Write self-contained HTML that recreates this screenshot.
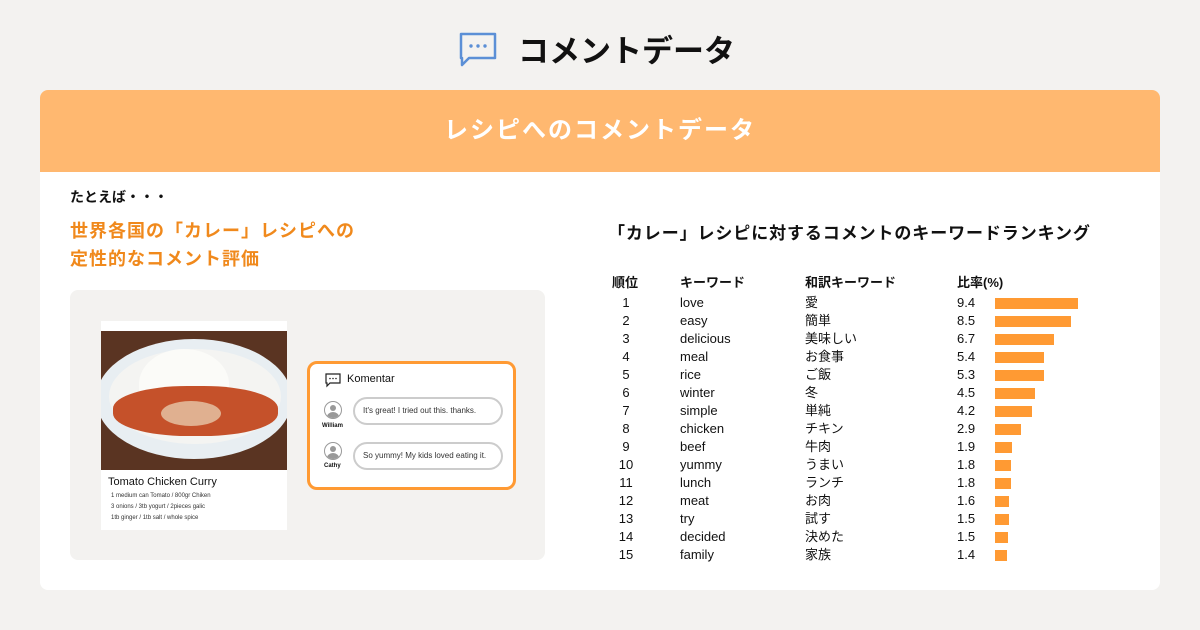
<!DOCTYPE html>
<html><head><meta charset="utf-8"><style>
*{margin:0;padding:0;box-sizing:border-box}
body{width:1200px;height:630px;background:#f3f2f0;font-family:"Liberation Sans","Noto Sans CJK JP",sans-serif;position:relative;overflow:hidden;color:#111}
.a{position:absolute}
.card{left:40px;top:90px;width:1120px;height:500px;background:#fff;border-radius:8px;overflow:hidden}
.hd{left:0;top:0;width:1120px;height:82px;background:#ffb870;color:#fff;font-weight:bold;font-size:24px;text-align:center;line-height:82px;letter-spacing:2px}
.or{color:#f0891c;font-weight:bold;font-size:18px;letter-spacing:1px}
.row{position:absolute;left:0;font-size:13px;height:18px;line-height:18px;width:600px}
.row span{position:absolute}
.bar{position:absolute;left:995px;height:11px;top:3.5px;background:#ff9a33}
.bub{position:absolute;left:353px;width:150px;height:28px;border:2px solid #ccc;border-radius:14px;font-size:8px;line-height:24px;padding-left:8px;color:#333;background:#fff}
.av{position:absolute;left:324px;width:18px;height:18px;border-radius:50%;border:1.5px solid #999;overflow:hidden;background:#fff}
</style></head><body>
<svg class="a" style="left:458px;top:31px" width="40" height="36" viewBox="0 0 40 36"><path d="M3 3H37V27H11L4 34V27H3Z" fill="none" stroke="#5b8fd6" stroke-width="2.5" stroke-linejoin="round"/><circle cx="13" cy="15" r="1.7" fill="#5b8fd6"/><circle cx="20" cy="15" r="1.7" fill="#5b8fd6"/><circle cx="27" cy="15" r="1.7" fill="#5b8fd6"/></svg>
<div class="a" style="left:518px;top:26px;font-size:31px;font-weight:bold">コメントデータ</div>
<div class="a card">
<div class="a hd">レシピへのコメントデータ</div>
</div>
<div class="a" style="left:70px;top:187px;font-size:14px;font-weight:bold">たとえば・・・</div>
<div class="a or" style="left:70px;top:217px;line-height:28px">世界各国の「カレー」レシピへの<br>定性的なコメント評価</div>
<div class="a" style="left:70px;top:290px;width:475px;height:270px;background:#f3f2f0;border-radius:8px"></div>
<div class="a" style="left:101px;top:321px;width:186px;height:209px;background:#fff"></div>
<div class="a" style="left:101px;top:331px;width:186px;height:139px;background:#5a3422;overflow:hidden">
 <div class="a" style="left:-5px;top:8px;width:196px;height:120px;border-radius:50%;background:#e8eef2"></div>
 <div class="a" style="left:8px;top:18px;width:172px;height:95px;border-radius:50%;background:#f4f4f2"></div>
 <div class="a" style="left:38px;top:18px;width:90px;height:70px;border-radius:50% 50% 40% 40%;background:#fbfbf8"></div>
 <div class="a" style="left:12px;top:55px;width:165px;height:50px;border-radius:45%;background:#c5512a"></div>
 <div class="a" style="left:60px;top:70px;width:60px;height:25px;border-radius:50%;background:#e0b090"></div>
</div>
<div class="a" style="left:108px;top:476px;font-size:11px">Tomato Chicken Curry</div>
<div class="a" style="left:111px;top:491px;font-size:6px;line-height:11px;color:#333">1 medium can Tomato / 800gr Chiken<br>3 onions / 3tb yogurt / 2pieces galic<br>1tb ginger / 1tb salt / whole spice</div>
<div class="a" style="left:307px;top:361px;width:209px;height:129px;border:3px solid #ff9a33;border-radius:10px;background:#fff"></div>
<svg class="a" style="left:325px;top:372px" width="16" height="16" viewBox="0 0 16 16"><path d="M1 2H15V11H5L2 14V11H1Z" fill="none" stroke="#222" stroke-width="1.2"/><circle cx="5" cy="6.5" r=".8" fill="#222"/><circle cx="8" cy="6.5" r=".8" fill="#222"/><circle cx="11" cy="6.5" r=".8" fill="#222"/></svg>
<div class="a" style="left:347px;top:373px;font-size:11px">Komentar</div>
<div class="av" style="top:401px"><div class="a" style="left:5px;top:3px;width:6px;height:6px;border-radius:50%;background:#999"></div><div class="a" style="left:2px;top:10px;width:12px;height:10px;border-radius:50%;background:#999"></div></div>
<div class="a" style="left:322px;top:423px;font-size:6px;font-weight:bold">William</div>
<div class="bub" style="top:397px">It's great! I tried out this. thanks.</div>
<div class="av" style="top:442px"><div class="a" style="left:5px;top:3px;width:6px;height:6px;border-radius:50%;background:#999"></div><div class="a" style="left:2px;top:10px;width:12px;height:10px;border-radius:50%;background:#999"></div></div>
<div class="a" style="left:324px;top:463px;font-size:6px;font-weight:bold">Cathy</div>
<div class="bub" style="top:442px">So yummy! My kids loved eating it.</div>
<div class="a" style="left:608px;top:219px;font-size:17px;font-weight:bold;letter-spacing:0.9px">「カレー」レシピに対するコメントのキーワードランキング</div>
<div class="a" style="left:0;top:274px;width:1200px;height:18px;font-size:13px;font-weight:bold;line-height:18px">
<span class="a" style="left:612px">順位</span><span class="a" style="left:680px">キーワード</span><span class="a" style="left:805px">和訳キーワード</span><span class="a" style="left:957px">比率(%)</span></div>
<div class="a" style="left:0;top:294px;width:1200px">
<div class="row" style="top:0;width:1200px"><span style="left:618px;width:16px;text-align:center">1</span><span style="left:680px">love</span><span style="left:805px">愛</span><span style="left:957px">9.4</span><div class="bar" style="width:83px"></div></div>
<div class="row" style="top:18px;width:1200px"><span style="left:618px;width:16px;text-align:center">2</span><span style="left:680px">easy</span><span style="left:805px">簡単</span><span style="left:957px">8.5</span><div class="bar" style="width:76px"></div></div>
<div class="row" style="top:36px;width:1200px"><span style="left:618px;width:16px;text-align:center">3</span><span style="left:680px">delicious</span><span style="left:805px">美味しい</span><span style="left:957px">6.7</span><div class="bar" style="width:59px"></div></div>
<div class="row" style="top:54px;width:1200px"><span style="left:618px;width:16px;text-align:center">4</span><span style="left:680px">meal</span><span style="left:805px">お食事</span><span style="left:957px">5.4</span><div class="bar" style="width:49px"></div></div>
<div class="row" style="top:72px;width:1200px"><span style="left:618px;width:16px;text-align:center">5</span><span style="left:680px">rice</span><span style="left:805px">ご飯</span><span style="left:957px">5.3</span><div class="bar" style="width:49px"></div></div>
<div class="row" style="top:90px;width:1200px"><span style="left:618px;width:16px;text-align:center">6</span><span style="left:680px">winter</span><span style="left:805px">冬</span><span style="left:957px">4.5</span><div class="bar" style="width:40px"></div></div>
<div class="row" style="top:108px;width:1200px"><span style="left:618px;width:16px;text-align:center">7</span><span style="left:680px">simple</span><span style="left:805px">単純</span><span style="left:957px">4.2</span><div class="bar" style="width:37px"></div></div>
<div class="row" style="top:126px;width:1200px"><span style="left:618px;width:16px;text-align:center">8</span><span style="left:680px">chicken</span><span style="left:805px">チキン</span><span style="left:957px">2.9</span><div class="bar" style="width:26px"></div></div>
<div class="row" style="top:144px;width:1200px"><span style="left:618px;width:16px;text-align:center">9</span><span style="left:680px">beef</span><span style="left:805px">牛肉</span><span style="left:957px">1.9</span><div class="bar" style="width:17px"></div></div>
<div class="row" style="top:162px;width:1200px"><span style="left:618px;width:16px;text-align:center">10</span><span style="left:680px">yummy</span><span style="left:805px">うまい</span><span style="left:957px">1.8</span><div class="bar" style="width:16px"></div></div>
<div class="row" style="top:180px;width:1200px"><span style="left:618px;width:16px;text-align:center">11</span><span style="left:680px">lunch</span><span style="left:805px">ランチ</span><span style="left:957px">1.8</span><div class="bar" style="width:16px"></div></div>
<div class="row" style="top:198px;width:1200px"><span style="left:618px;width:16px;text-align:center">12</span><span style="left:680px">meat</span><span style="left:805px">お肉</span><span style="left:957px">1.6</span><div class="bar" style="width:14px"></div></div>
<div class="row" style="top:216px;width:1200px"><span style="left:618px;width:16px;text-align:center">13</span><span style="left:680px">try</span><span style="left:805px">試す</span><span style="left:957px">1.5</span><div class="bar" style="width:14px"></div></div>
<div class="row" style="top:234px;width:1200px"><span style="left:618px;width:16px;text-align:center">14</span><span style="left:680px">decided</span><span style="left:805px">決めた</span><span style="left:957px">1.5</span><div class="bar" style="width:13px"></div></div>
<div class="row" style="top:252px;width:1200px"><span style="left:618px;width:16px;text-align:center">15</span><span style="left:680px">family</span><span style="left:805px">家族</span><span style="left:957px">1.4</span><div class="bar" style="width:12px"></div></div>
</div>
</body></html>
